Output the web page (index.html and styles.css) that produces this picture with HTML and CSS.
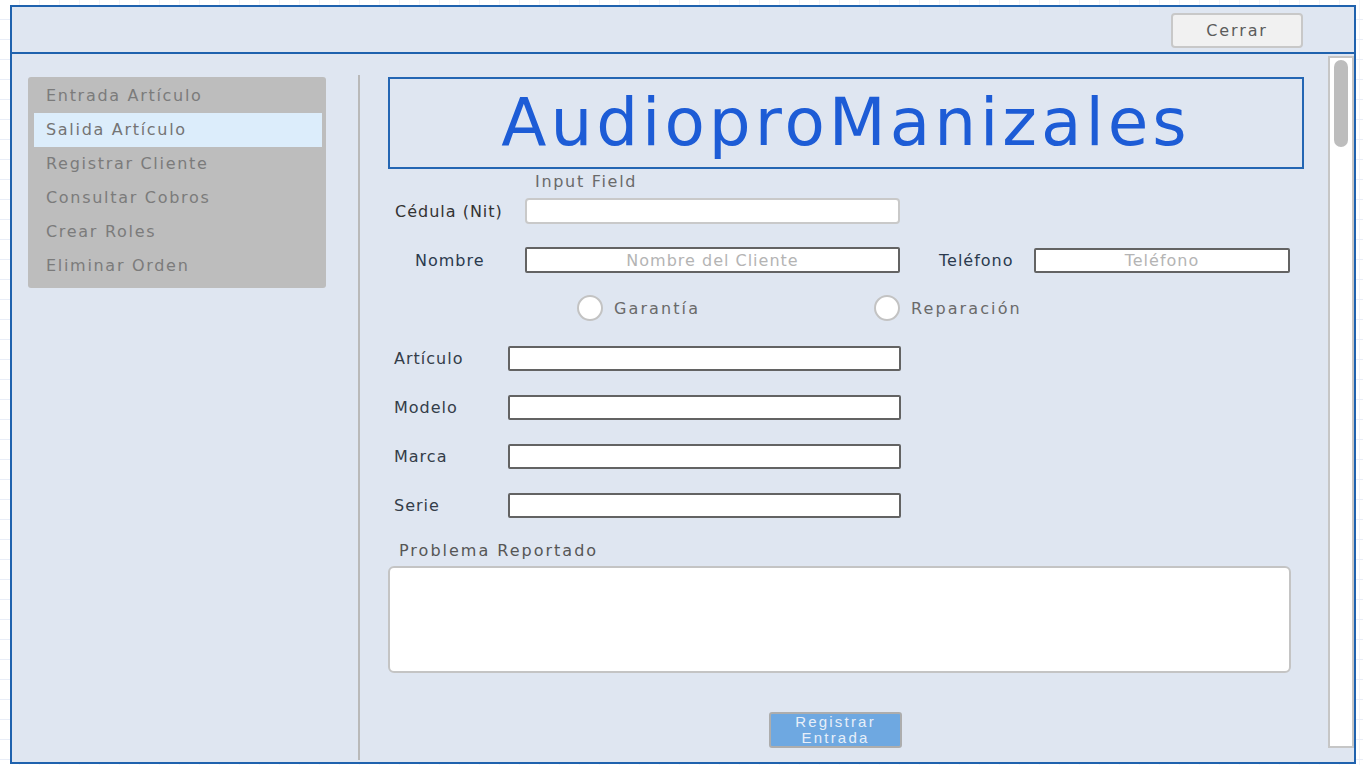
FILE: index.html
```html
<!DOCTYPE html>
<html lang="es">
<head>
<meta charset="utf-8">
<title>AudioproManizales</title>
<link rel="stylesheet" href="styles.css">
</head>
<body>
<div class="frame">
  <header class="topbar">
    <button class="btn-close" type="button">Cerrar</button>
  </header>
  <main class="main">
    <aside class="side">
      <nav class="menu">
        <div class="menu-item">Entrada Artículo</div>
        <div class="menu-item is-active">Salida Artículo</div>
        <div class="menu-item">Registrar Cliente</div>
        <div class="menu-item">Consultar Cobros</div>
        <div class="menu-item">Crear Roles</div>
        <div class="menu-item">Eliminar Orden</div>
      </nav>
    </aside>
    <div class="divider"></div>
    <section class="content">
      <div class="title-box">AudioproManizales</div>

      <div class="hint">Input Field</div>

      <div class="row row-cedula">
        <label class="lbl lbl-cedula">Cédula (Nit)</label>
        <input class="field field-soft field-wide" type="text">
      </div>

      <div class="row row-nombre">
        <label class="lbl lbl-nombre">Nombre</label>
        <input class="field field-wide" type="text" placeholder="Nombre del Cliente">
        <label class="lbl lbl-tel">Teléfono</label>
        <input class="field field-tel" type="text" placeholder="Teléfono">
      </div>

      <div class="row row-radio">
        <label class="radio radio-first"><input class="radio-dot" type="radio" name="tipo"><span>Garantía</span></label>
        <label class="radio"><input class="radio-dot" type="radio" name="tipo"><span>Reparación</span></label>
      </div>

      <div class="row item-row item-first">
        <label class="lbl lbl-item">Artículo</label>
        <input class="field field-item" type="text">
      </div>
      <div class="row item-row">
        <label class="lbl lbl-item">Modelo</label>
        <input class="field field-item" type="text">
      </div>
      <div class="row item-row">
        <label class="lbl lbl-item">Marca</label>
        <input class="field field-item" type="text">
      </div>
      <div class="row item-row">
        <label class="lbl lbl-item">Serie</label>
        <input class="field field-item" type="text">
      </div>

      <div class="problem-label">Problema Reportado</div>
      <textarea class="problem"></textarea>

      <div class="actions">
        <button class="btn-submit" type="button"><span class="btn-line">Registrar</span><span class="btn-line">Entrada</span></button>
      </div>
    </section>
    <div class="scrollbar"><div class="thumb"></div></div>
  </main>
</div>
</body>
</html>
```

FILE: styles.css
```css
* { box-sizing: border-box; }

html, body { margin: 0; padding: 0; }

body {
  width: 1363px;
  height: 765px;
  overflow: hidden;
  font-family: "DejaVu Sans", Verdana, sans-serif;
  font-size: 16px;
  background-color: #ffffff;
  background-image:
    repeating-linear-gradient(to bottom, transparent 0, transparent 19px, #e9eef8 19px, #e9eef8 20px),
    repeating-linear-gradient(to right, transparent 0, transparent 19px, #f1f4fb 19px, #f1f4fb 20px);
}

.frame {
  margin: 5px 0 0 10px;
  width: 1346px;
}

.topbar {
  height: 49px;
  border: 2px solid #1f62ae;
  background: #dfe6f1;
  display: flex;
  justify-content: flex-end;
  align-items: center;
  padding-right: 51px;
  padding-top: 1px;
}

.btn-close {
  width: 132px;
  height: 35px;
  border: 2px solid #c8c8c8;
  border-radius: 4px;
  background: #f1f1f1;
  color: #5c5c5c;
  font-family: "DejaVu Sans", Verdana, sans-serif;
  font-size: 16px;
  letter-spacing: 1.9px;
  padding: 0;
}

.main {
  height: 710px;
  border: 2px solid #1f62ae;
  border-top: none;
  background: #dfe6f1;
  display: flex;
  align-items: flex-start;
}

.side {
  width: 346px;
  flex: none;
  margin-top: 23px;
  padding-left: 16px;
}

.menu {
  width: 298px;
  background: #bdbdbd;
  border-radius: 3px;
  padding: 2px 4px 5px 6px;
}

.menu-item {
  height: 34px;
  line-height: 34px;
  padding-left: 12px;
  color: #7b7b7b;
  font-size: 16px;
  letter-spacing: 1.7px;
  white-space: nowrap;
}

.menu-item.is-active {
  background: #dcedfb;
  color: #747474;
}

.divider {
  width: 2px;
  flex: none;
  align-self: stretch;
  margin: 21px 0 2px;
  background: #b9b9b9;
}

.content {
  flex: 1;
  margin-top: 23px;
  padding-left: 28px;
}

.title-box {
  width: 916px;
  height: 92px;
  border: 2px solid #2466b3;
  color: #1d5cd6;
  font-size: 66px;
  line-height: 88px;
  letter-spacing: 4px;
  text-align: center;
  white-space: nowrap;
}

.hint {
  margin-top: 3px;
  height: 20px;
  line-height: 20px;
  padding-left: 147px;
  color: #6a6a6a;
  letter-spacing: 1.7px;
}

.row {
  display: flex;
  align-items: center;
}

.lbl {
  flex: none;
  font-size: 16px;
  letter-spacing: 1px;
  white-space: nowrap;
}

.row-cedula { margin-top: 6px; height: 26px; }
.lbl-cedula { width: 137px; padding-left: 7px; color: #333333; }

.row-nombre { margin-top: 23px; height: 26px; }
.lbl-nombre { width: 137px; padding-left: 27px; color: #2b3a4e; }
.lbl-tel { width: 95px; margin-left: 39px; color: #2b3a4e; }

.field {
  flex: none;
  background: #ffffff;
  border: 2px solid #636363;
  border-radius: 2px;
  font-family: "DejaVu Sans", Verdana, sans-serif;
  font-size: 16px;
  letter-spacing: 1px;
  text-align: center;
  color: #333;
  padding: 0 4px;
  outline: none;
}

.field::placeholder { color: #b4b4b4; opacity: 1; }

.field-soft {
  border-color: #c9c9c9;
  border-radius: 4px;
}

.field-wide { width: 375px; height: 26px; }
.field-tel { width: 256px; height: 25px; }

.row-radio { margin-top: 22px; height: 26px; padding-left: 189px; }

.radio {
  display: flex;
  align-items: center;
  color: #6a6a6a;
  letter-spacing: 2.1px;
  white-space: nowrap;
}

.radio-first { width: 297px; }

.radio-dot {
  appearance: none;
  -webkit-appearance: none;
  width: 26px;
  height: 26px;
  margin: 0 11px 0 0;
  border: 2px solid #c3c3c3;
  border-radius: 50%;
  background: #ffffff;
}

.item-row { margin-top: 24px; height: 25px; }
.item-first { margin-top: 25px; }
.lbl-item { width: 120px; padding-left: 6px; color: #343d49; }
.field-item { width: 393px; height: 25px; }

.problem-label {
  margin-top: 23px;
  height: 20px;
  line-height: 20px;
  padding-left: 11px;
  color: #565656;
  letter-spacing: 2px;
}

.problem {
  display: block;
  margin-top: 5px;
  width: 903px;
  height: 107px;
  border: 2px solid #c4c4c4;
  border-radius: 6px;
  background: #ffffff;
  resize: none;
  outline: none;
}

.actions {
  margin-top: 39px;
  padding-left: 381px;
}

.btn-submit {
  width: 133px;
  height: 36px;
  padding: 0;
  border: 2px solid #adadad;
  border-radius: 3px;
  background: #6ea8e1;
  color: #e7eff9;
  font-family: "Liberation Sans", Arial, sans-serif;
  font-size: 15px;
  line-height: 16px;
  letter-spacing: 2.2px;
  display: flex;
  flex-direction: column;
  align-items: center;
  justify-content: center;
}

.btn-line {
  display: block;
  height: 16px;
  line-height: 16px;
}

.scrollbar {
  flex: none;
  width: 26px;
  height: 692px;
  margin-top: 2px;
  border: 2px solid #c6c6c6;
  background: #ffffff;
  padding-top: 2px;
}

.thumb {
  width: 14px;
  height: 87px;
  margin: 0 auto;
  border-radius: 7px;
  background: #bdbdbd;
}
```
